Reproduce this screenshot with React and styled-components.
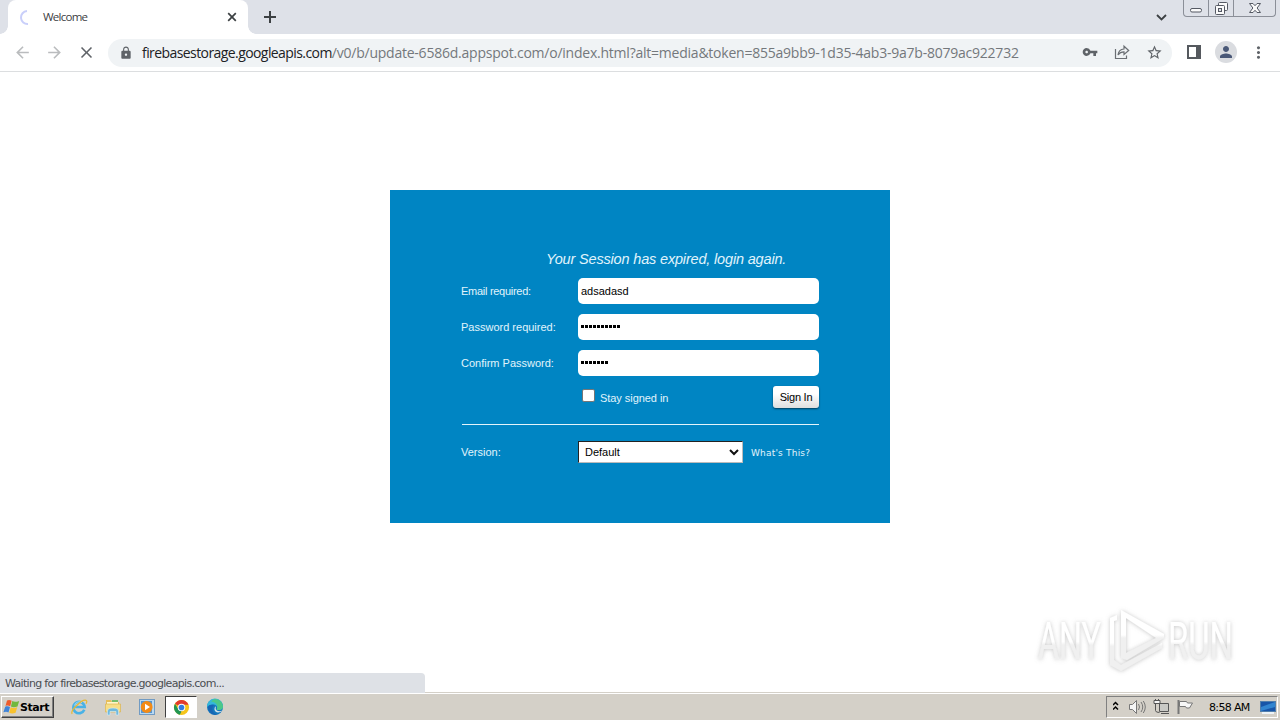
import React from "react";
import styled, { createGlobalStyle } from "styled-components";
import { MdLock, MdStarBorder, MdVpnKey, MdPerson, MdMoreVert, MdArrowBack, MdArrowForward, MdClose } from "react-icons/md";

const GlobalStyle = createGlobalStyle`
    * { box-sizing: border-box; }
    html, body { margin: 0; padding: 0; overflow: hidden; }
    svg { display: block; flex: none; }
`

const Screen = styled.div`
    position: relative;
    display: flex;
    flex-direction: column;
    width: 1280px;
    height: 720px;
    background: #fff;
    font-family: "Liberation Sans", Arial, sans-serif;
`

const TabStrip = styled.div`
    display: flex;
    height: 34px;
    padding-left: 8px;
    background: #dee1e8;
`

const Tab = styled.div`
    position: relative;
    display: flex;
    align-items: center;
    width: 240px;
    height: 34px;
    padding: 0 11px 0 11px;
    border-radius: 8px 8px 0 0;
    background: #fff;

    &::before, &::after {
        content: "";
        position: absolute;
        bottom: 0;
        width: 8px;
        height: 8px;
    }
    &::before {
        left: -8px;
        background: radial-gradient(circle at 0 0, transparent 7.5px, #fff 8px);
    }
    &::after {
        right: -8px;
        background: radial-gradient(circle at 100% 0, transparent 7.5px, #fff 8px);
    }
`

const TabTitle = styled.span`
    flex: 1;
    margin: 0 0 2px 7px;
    color: #3c4043;
    font: 11.5px "Open Sans", sans-serif;
    letter-spacing: -0.75px;
`

const NewTab = styled.div`
    display: flex;
    align-items: center;
    flex: 1;
    margin-left: 16px;
`

const TabSearch = styled.div`
    display: flex;
    align-items: center;
    width: 27px;
`

const WindowButtons = styled.div`
    display: flex;
    height: 17px;
    width: 93px;
    margin: 0 4px 0 0;
    border: 1px solid #8b8f98;
    border-top: 0;
    border-radius: 0 0 4px 4px;
`

const WindowButton = styled.div`
    display: flex;
    justify-content: center;
    width: ${props => props.$width}px;
    border-right: ${props => props.$last ? "0" : "1px solid #8b8f98"};
`

const Toolbar = styled.div`
    display: flex;
    align-items: center;
    height: 38px;
    padding: 0 13px 1px 13px;
    border-bottom: 1px solid #dcdee0;
    color: #5f6368;
`

const NavButton = styled.div`
    display: flex;
    flex: none;
    width: 32px;
    color: ${props => props.$muted ? "#babcbe" : "#5f6368"};
`

const AddressBar = styled.div`
    display: flex;
    align-items: center;
    flex: none;
    width: 1064px;
    height: 28px;
    margin: 1px 0 0 -1px;
    padding: 0 9px 0 11px;
    border-radius: 14px;
    background: #f0f3f5;
`

const Url = styled.div`
    flex: 1;
    margin-left: 9px;
    padding-top: 1px;
    color: #74787c;
    font: 14px/20px "Open Sans", sans-serif;
    white-space: nowrap;
    letter-spacing: -0.23px;
`

const Domain = styled.span`
    color: #202124;
    letter-spacing: -0.58px;
`

const ActionIcons = styled.div`
    display: flex;
    gap: 16px;
`

const SidePanelButton = styled.div`
    display: flex;
    margin-left: 15px;
`

const Avatar = styled.div`
    display: flex;
    align-items: center;
    justify-content: center;
    flex: none;
    width: 22px;
    height: 22px;
    margin: 0 12px 0 14px;
    border-radius: 50%;
    background: #dadce0;
    color: #4a5877;
`

const Page = styled.main`
    flex: 1;
    padding-top: 118px;
`

const LoginPanel = styled.div`
    width: 500px;
    height: 333px;
    margin: 0 auto;
    padding: 58px 71px 0;
    background: #0085c3;
    color: #e0f4fc;
    font-size: 11px;
`

const Notice = styled.div`
    height: 30px;
    padding-left: 85px;
    font-size: 14.5px;
    font-style: italic;
    line-height: 22px;
    letter-spacing: -0.17px;
    white-space: nowrap;
`

const Field = styled.label`
    display: grid;
    grid-template-columns: 117px 241px;
    align-items: center;
    height: 26px;
    margin-bottom: 10px;
    letter-spacing: ${props => props.$spacing || 0}px;
`

const TextBox = styled.div`
    height: 26px;
    padding-left: 3px;
    border-radius: 5px;
    background: #fff;
    color: #000;
    line-height: 26px;
    letter-spacing: 0;
`

const Dots = styled.div`
    display: flex;
    align-items: center;
    gap: 1px;
    height: 25px;
`

const Dot = styled.i`
    width: 3px;
    height: 3px;
    background: #000;
`

const SubmitRow = styled.div`
    display: flex;
    width: 357px;
    height: 39px;
    margin-left: 1px;
    padding-left: 120px;
    border-bottom: 1px solid #e3f4fb;
`

const Checkbox = styled.div`
    width: 13px;
    height: 13px;
    margin: 3px 5px 0 0;
    border: 1px solid #767676;
    border-radius: 2px;
    background: #fff;
`

const StayLabel = styled.span`
    flex: 1;
    line-height: 25px;
    letter-spacing: -0.05px;
`

const SignIn = styled.button`
    width: 46px;
    height: 22px;
    padding: 0;
    border: 0;
    border-radius: 3px;
    background: linear-gradient(#fff 35%, #dedede);
    box-shadow: 0 1px 2px rgba(0,0,0,.55);
    color: #000;
    font: 11px "Liberation Sans", Arial, sans-serif;
    letter-spacing: -0.25px;
`

const VersionRow = styled.div`
    display: flex;
    align-items: center;
    height: 22px;
    margin-top: 16px;
`

const VersionLabel = styled.span`
    width: 117px;
`

const Select = styled.div`
    display: flex;
    align-items: center;
    justify-content: space-between;
    width: 165px;
    height: 22px;
    padding: 0 3px 0 6px;
    border: 1px solid #222;
    border-right-color: #bbb;
    border-bottom-color: #bbb;
    background: #fff;
    color: #000;
`

const Help = styled.span`
    margin: 2px 0 0 8px;
    font: 9px "DejaVu Sans", sans-serif;
    letter-spacing: 0.2px;
`

const StatusBubble = styled.div`
    position: absolute;
    left: 0;
    top: 673px;
    width: 425px;
    height: 20px;
    padding: 1px 0 0 5px;
    border-radius: 0 4px 0 0;
    background: #dee1e6;
    color: #4a4d51;
    font: 11px/20px "DejaVu Sans", sans-serif;
    letter-spacing: -0.69px;
`

const Watermark = styled.div`
    position: absolute;
    left: 1030px;
    top: 600px;
`

const Taskbar = styled.div`
    display: flex;
    align-items: center;
    height: 28px;
    padding: 1px 2px 0 1px;
    border-top: 1px solid #d4d0c8;
    box-shadow: inset 0 1px #fff;
    background: #d4d0c8;
`

const StartButton = styled.div`
    display: flex;
    align-items: center;
    width: 53px;
    height: 22px;
    margin-right: 9px;
    padding-left: 1px;
    border: 1px solid;
    border-color: #fff #404040 #404040 #fff;
    box-shadow: inset -1px -1px #808080;
    color: #000;
    font: bold 11px "DejaVu Sans", sans-serif;
    letter-spacing: -0.45px;
`

const TaskItem = styled.div`
    display: flex;
    align-items: center;
    justify-content: center;
    width: 32px;
    height: 22px;
    margin-right: 2px;
    border: 1px solid transparent;
    ${props => props.$active && `
        border-color: #404040 #fff #fff #404040;
        background: #fff;
    `}
`

const Tray = styled.div`
    display: flex;
    align-items: center;
    width: 172px;
    height: 22px;
    margin-left: auto;
    padding-left: 6px;
    border: 1px solid;
    border-color: #808080 #fff #fff #808080;
`

const Clock = styled.span`
    width: 51px;
    margin-left: 15px;
    color: #000;
    font: 11px "DejaVu Sans", sans-serif;
    letter-spacing: -0.65px;
    white-space: nowrap;
`

function Throbber(){
    return(
        <svg width="17" height="17" viewBox="0 0 17 17" fill="none">
            <path d="M8 2A6.5 6.5 0 0 0 9 15" stroke="#c9cffa" strokeWidth="2"/>
        </svg>
    )
}

function TabClose(){
    return <svg width="10" height="10"><path d="M1.2 1.2 8.8 8.8M8.8 1.2 1.2 8.8" stroke="#3c4043" strokeWidth="1.7"/></svg>
}

function PlusIcon(){
    return <svg width="12" height="12"><path d="M6 0v12M0 6h12" stroke="#3c4043" strokeWidth="2"/></svg>
}

function MinimizeIcon(){
    return <svg width="14" height="16"><rect x="1.5" y="8.5" width="11" height="3.5" rx="1.5" fill="#fafafa" stroke="#555963"/></svg>
}

function RestoreIcon(){
    return(
        <svg width="15" height="16" fill="#fafafa" stroke="#555963">
            <rect x="4.5" y="2.5" width="9" height="8" rx="1"/>
            <rect x="1.5" y="5.5" width="9" height="9" rx="1"/>
            <rect x="4.5" y="8.5" width="3" height="3" fill="#dee1e6"/>
        </svg>
    )
}

function CloseIcon(){
    return(
        <svg width="14" height="16" fill="#fafafa" stroke="#555963">
            <path d="M1.5 3.5H5L7 5.7 9 3.5H12.5L9.1 8l3.4 4.5H9L7 10.3 5 12.5H1.5L4.9 8z"/>
        </svg>
    )
}

function ShareIcon(){
    return(
        <svg width="16" height="16" fill="none" stroke="#6b6f74" strokeWidth="1.2">
            <path d="M1.5 5V14.5H12.5V11.5"/>
            <path d="M4 11C4.5 7 6.5 5.2 10 5V2.2L14.7 6.5 10 10.5V7.8C7.5 7.8 5.4 8.9 4 11z"/>
        </svg>
    )
}

function SidePanelIcon(){
    return(
        <svg width="14" height="14" fill="none">
            <rect x="1" y="1" width="12" height="12" stroke="#55595e" strokeWidth="2"/>
            <path d="M9 1h5v12H9z" fill="#55595e"/>
        </svg>
    )
}

function WindowsLogo(){
    return(
        <svg width="17" height="16" viewBox="0 0 17 16">
            <path d="M4 1.5C6 .5 7.2 1 8.6 1.8L7.2 7.2C5.6 6.3 4.2 6.3 2.5 6.9z" fill="#ee5c2c"/>
            <path d="M9.3 2.1C11.3 3.2 13.4 3 16.2 1.9L14.5 7.4C11.7 8.5 9.7 8.4 7.9 7.5z" fill="#72b83e"/>
            <path d="M2.2 7.7C4 7 5.5 7.2 7 8L5.5 13.5C4 12.5 2.5 12.5 .4 13.2z" fill="#3f84d8"/>
            <path d="M7.7 8.3C9.6 9.3 11.5 9.2 14.2 8.3L12.6 13.7C10 14.8 8 14.6 6.2 13.7z" fill="#f8c22e"/>
        </svg>
    )
}

function ExplorerLogo(){
    return(
        <svg width="18" height="18" viewBox="0 0 18 18" fill="none">
            <path d="M14.3 11.7A5.7 5.7 0 1 1 14.7 9H5" stroke="#49b2e6" strokeWidth="2.6"/>
            <path d="M4.5 7.5A5 5 0 0 1 12 4.6" stroke="#9fdef8" strokeWidth="1"/>
            <path d="M2.2 15.8C-.2 12.8 11.8 1.2 16 2.3C17.3 2.8 16.8 4.4 16 5.7" stroke="#e7b932" strokeWidth="1.2"/>
        </svg>
    )
}

function FolderIcon(){
    return(
        <svg width="18" height="18" viewBox="0 0 18 18">
            <path d="M2 2h5l1 2h7v10H2z" fill="#e7be59"/>
            <path d="M3 4h11v3H3z" fill="#fff5c9"/>
            <path d="M8 2h6v2H8z" fill="#76bd6c"/>
            <path d="M1.5 6h15v8h-15z" fill="#f7de87" stroke="#d9ae46" strokeWidth=".6"/>
            <path d="M3.5 17v-4q0-3 5.5-3t5.5 3v4H12v-3.5H6V17z" fill="#6fb8dd" stroke="#d5eff9" strokeWidth=".6"/>
        </svg>
    )
}

function PlayerIcon(){
    return(
        <svg width="18" height="18" viewBox="0 0 18 18">
            <rect x="1.5" y="1.5" width="15" height="15" fill="#b9d9f2" stroke="#719bc3"/>
            <rect x="3" y="3" width="11" height="12" fill="#5696d2"/>
            <circle cx="8.7" cy="9" r="5.9" fill="#f38b16"/>
            <path d="M7 5.7v6.6L12 9z" fill="#fff"/>
        </svg>
    )
}

function ChromeLogo(){
    return(
        <svg width="17" height="17" viewBox="0 0 18 18">
            <circle cx="9" cy="9" r="8" fill="#f5c51b"/>
            <path d="M9 9 2.1 5A8 8 0 0 1 15.9 5L16.4 6H9z" fill="#e33b2e"/>
            <path d="M2.1 5 6 11.5 9 13 7.3 16.8A8 8 0 0 1 2.1 5z" fill="#219653"/>
            <circle cx="9" cy="9" r="4" fill="#fff"/>
            <circle cx="9" cy="9" r="3" fill="#347de0"/>
        </svg>
    )
}

function EdgeLogo(){
    return(
        <svg width="18" height="18" viewBox="0 0 18 18">
            <circle cx="9" cy="9" r="8" fill="#1577bd"/>
            <path d="M1 9A8 8 0 0 1 17 8C17.4 12 12.8 12.7 10.6 11.5C12.2 9.8 11 7 7.8 6.5C4.5 6 2 7.5 1 9z" fill="#35b8da"/>
            <path d="M9 1A8 8 0 0 1 17 8C17.4 12 12.8 12.7 10.6 11.5C13 6.5 9 4 5 3.5Q7 1 9 1z" fill="#4cc889"/>
            <path d="M9.5 8.2C7.5 10.5 8.5 14.2 12 14.4C13.6 14.4 15 13.7 16 12.7C13.7 13.6 10.5 13.3 9.8 11.3C9.4 10 10.2 9.3 9.5 8.2z" fill="#d4e3e8"/>
            <path d="M2 9C2 15 8 17.5 11 16.6C6 15 5 10 8 7C5 6.5 2.8 7.3 2 9z" fill="#1765b4"/>
        </svg>
    )
}

function TrayIcons(){
    return(
        <svg width="81" height="18" viewBox="0 0 81 18" fill="none">
            <path d="M0 7 2.5 4.5 5 7M0 11.5 2.5 9 5 11.5" stroke="#000" strokeWidth="1.5"/>
            <path d="M16.5 6.5h3l4-4v13l-4-4h-3z" fill="#f5f5f5" stroke="#777"/>
            <path d="M25.5 6q2 3 0 6M28 4q3.5 5 0 10M30.3 3q4 6 0 12" stroke="#777"/>
            <path d="M46.5 5.5h9v8h-9z" fill="#c9c9c5" stroke="#555"/>
            <path d="M48 15.5h8M42.5 5v7.5q0 2 4 2" stroke="#555"/>
            <path d="M41 2.5h6v3h-6zM42.5 1v2M45.5 1v2" fill="#f5f5f5" stroke="#555"/>
            <path d="M65.5 2v14" stroke="#777" strokeWidth="2"/>
            <path d="M66.5 3.5h7l1 1.5h5l-3 5h-3l-1-1.5h-6z" fill="#f7f7f7" stroke="#777"/>
        </svg>
    )
}

function DesktopIcon(){
    return(
        <svg width="16" height="16" viewBox="0 0 16 16">
            <rect x=".5" y="2.5" width="15" height="10" fill="#1855a8" stroke="#527fac"/>
            <path d="M1 8 15 3v5L1 12z" fill="#3285d0"/>
            <path d="M2 14h12" stroke="#edf3f7" strokeWidth="2"/>
        </svg>
    )
}

function AnyRunLogo(){
    return(
        <svg width="240" height="90" viewBox="0 0 240 90" overflow="visible">
            <defs>
                <filter id="glow" x="-10%" y="-15%" width="120%" height="130%">
                    <feDropShadow dx="0" dy="0.3" stdDeviation="2" floodColor="#888" floodOpacity=".5"/>
                </filter>
                <linearGradient id="fade" x1="0" y1="0" x2="0" y2="1">
                    <stop offset=".5" stopColor="#fff"/>
                    <stop offset=".56" stopColor="#f0f0f0"/>
                </linearGradient>
            </defs>
            <g filter="url(#glow)" fill="url(#fade)">
                <text x="8" y="59" textLength="63" lengthAdjust="spacingAndGlyphs" fontFamily="Roboto, sans-serif" fontSize="51">ANY</text>
                <text x="138" y="59" textLength="65" lengthAdjust="spacingAndGlyphs" fontFamily="Roboto, sans-serif" fontSize="51">RUN</text>
                <path fillRule="evenodd" d="M91 10 134 34V38L97 60 91 58zM96 18V53L126 38z"/>
                <path d="M80 18 87 15V20L84 21V60L91 65 132 43V48L91 71 80 65z"/>
            </g>
        </svg>
    )
}

function Password(props){
    return(
        <TextBox>
            <Dots>{Array.from({ length: props.length }, (_, i) => <Dot key={i}/>)}</Dots>
        </TextBox>
    )
}

export default function App(){
    return(
        <Screen>
            <GlobalStyle/>
            <TabStrip>
                <Tab>
                    <Throbber/>
                    <TabTitle>Welcome</TabTitle>
                    <TabClose/>
                </Tab>
                <NewTab><PlusIcon/></NewTab>
                <TabSearch>
                    <svg width="11" height="7"><path d="M1 1 5.5 5.5 10 1" fill="none" stroke="#3c4043" strokeWidth="1.8"/></svg>
                </TabSearch>
                <WindowButtons>
                    <WindowButton $width={25}><MinimizeIcon/></WindowButton>
                    <WindowButton $width={25}><RestoreIcon/></WindowButton>
                    <WindowButton $width={41} $last><CloseIcon/></WindowButton>
                </WindowButtons>
            </TabStrip>
            <Toolbar>
                <NavButton $muted><MdArrowBack size={19}/></NavButton>
                <NavButton $muted><MdArrowForward size={19}/></NavButton>
                <NavButton><MdClose size={19}/></NavButton>
                <AddressBar>
                    <MdLock size={14}/>
                    <Url><Domain>firebasestorage.googleapis.com</Domain>/v0/b/update-6586d.appspot.com/o/index.html?alt=media&amp;token=855a9bb9-1d35-4ab3-9a7b-8079ac922732</Url>
                    <ActionIcons>
                        <MdVpnKey size={16}/>
                        <ShareIcon/>
                        <MdStarBorder size={17}/>
                    </ActionIcons>
                </AddressBar>
                <SidePanelButton><SidePanelIcon/></SidePanelButton>
                <Avatar><MdPerson size={18}/></Avatar>
                <MdMoreVert size={19}/>
            </Toolbar>
            <Page>
                <LoginPanel>
                    <Notice>Your Session has expired, login again.</Notice>
                    <Field $spacing={-0.28}>Email required:<TextBox>adsadasd</TextBox></Field>
                    <Field>Password required:<Password length={10}/></Field>
                    <Field>Confirm Password:<Password length={7}/></Field>
                    <SubmitRow>
                        <Checkbox/>
                        <StayLabel>Stay signed in</StayLabel>
                        <SignIn>Sign In</SignIn>
                    </SubmitRow>
                    <VersionRow>
                        <VersionLabel>Version:</VersionLabel>
                        <Select>
                            Default
                            <svg width="10" height="7"><path d="M1 1 5 5 9 1" fill="none" stroke="#111" strokeWidth="2"/></svg>
                        </Select>
                        <Help>What's This?</Help>
                    </VersionRow>
                </LoginPanel>
            </Page>
            <Taskbar>
                <StartButton><WindowsLogo/>Start</StartButton>
                <TaskItem><ExplorerLogo/></TaskItem>
                <TaskItem><FolderIcon/></TaskItem>
                <TaskItem><PlayerIcon/></TaskItem>
                <TaskItem $active><ChromeLogo/></TaskItem>
                <TaskItem><EdgeLogo/></TaskItem>
                <Tray>
                    <TrayIcons/>
                    <Clock>8:58 AM</Clock>
                    <DesktopIcon/>
                </Tray>
            </Taskbar>
            <StatusBubble>Waiting for firebasestorage.googleapis.com...</StatusBubble>
            <Watermark><AnyRunLogo/></Watermark>
        </Screen>
    )
}
